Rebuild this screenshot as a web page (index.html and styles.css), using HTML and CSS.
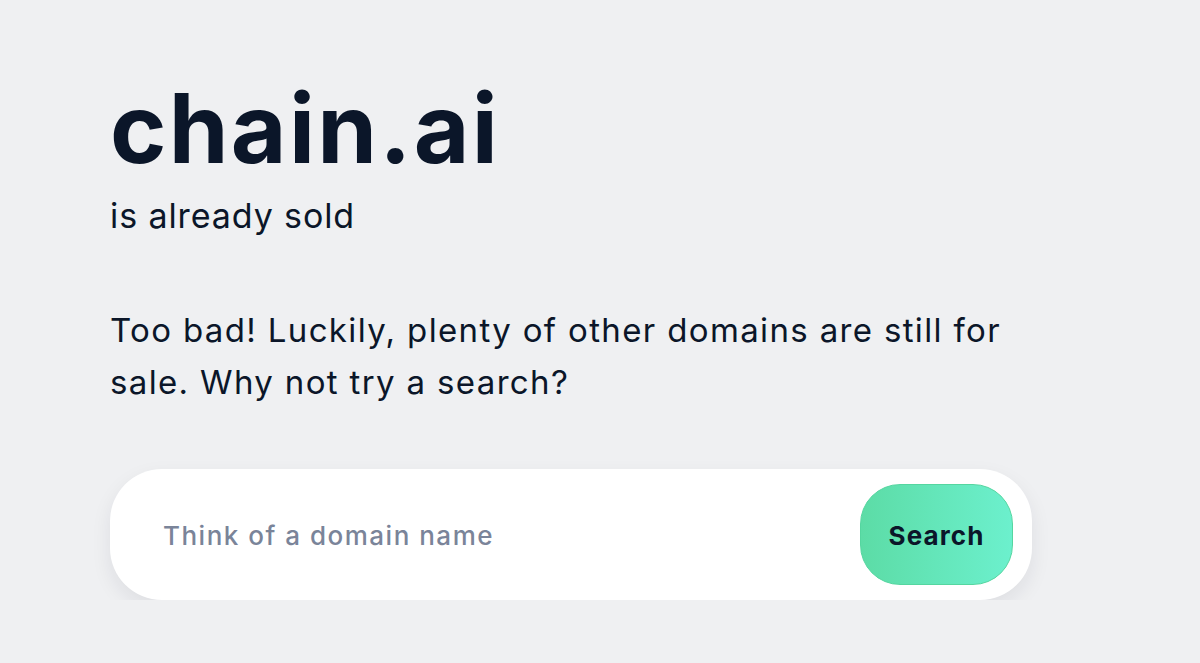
FILE: index.html
```html
<!DOCTYPE html>
<html lang="en">
<head>
<meta charset="utf-8">
<title>chain.ai is already sold</title>
<link rel="stylesheet" href="styles.css">
</head>
<body>
<main class="page">
  <h1 class="domain">chain.ai</h1>
  <p class="status">is already sold</p>
  <p class="lead">Too bad! Luckily, plenty of other domains are still for sale. Why not try a search?</p>
  <form class="search" onsubmit="return false">
    <input class="search-input" type="text" placeholder="Think of a domain name">
    <button class="search-btn" type="submit">Search</button>
  </form>
</main>
</body>
</html>
```
FILE: styles.css
```css
html, body {
  margin: 0;
  padding: 0;
  background: #eff0f2;
}
body {
  font-family: Inter, "Noto Sans", sans-serif;
  color: #0b1629;
}
.page {
  padding: 80px 0 0 110px;
  width: 922px;
}
.domain {
  margin: 0;
  font-size: 96px;
  font-weight: 700;
  line-height: 1;
  letter-spacing: 2.3px;
}
.status {
  margin: 20px 0 0;
  font-size: 34px;
  font-weight: 400;
  line-height: 1.2;
  letter-spacing: 0.9px;
}
.lead {
  margin: 67px 0 0;
  font-size: 33px;
  line-height: 52px;
  letter-spacing: 1.35px;
}
.search {
  margin-top: 61px;
  display: flex;
  align-items: center;
  height: 131px;
  background: #fff;
  border-radius: 52px;
  padding: 0 19px 0 53px;
  box-sizing: border-box;
  box-shadow: 0 8px 20px rgba(20, 30, 50, 0.08);
}
.search-input {
  flex: 1;
  min-width: 0;
  border: 0;
  outline: none;
  background: transparent;
  font-family: inherit;
  font-size: 26px;
  font-weight: 500;
  letter-spacing: 1.5px;
  color: #0b1629;
  padding: 2px 0 0;
}
.search-input::placeholder {
  color: #7a8499;
}
.search-btn {
  width: 153px;
  height: 101px;
  border-radius: 40px;
  border: 1px solid #55d6a0;
  background: linear-gradient(90deg, #5cdca6, #6cf0cd);
  font-family: inherit;
  font-size: 26px;
  font-weight: 700;
  letter-spacing: 1.1px;
  color: #0b1629;
  padding: 2px 0 0;
}
```
